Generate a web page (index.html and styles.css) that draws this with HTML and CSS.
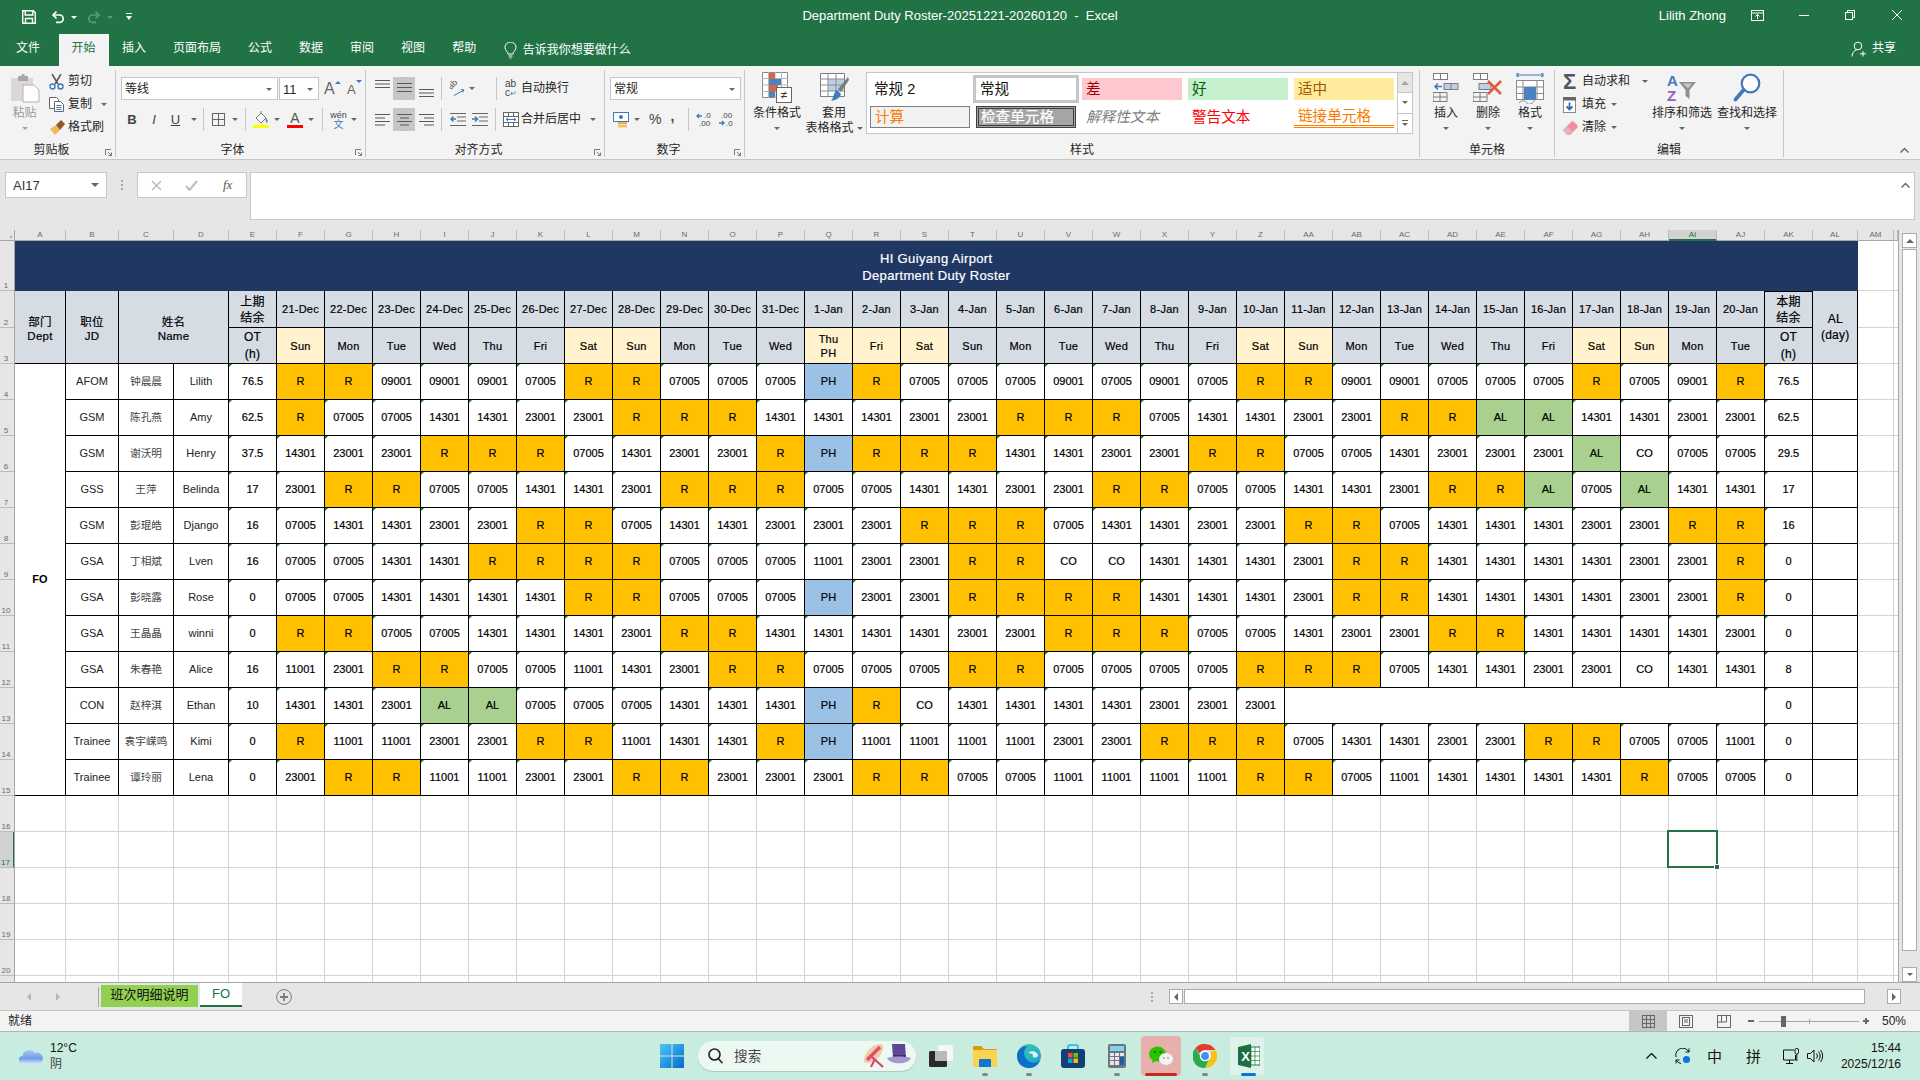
FILE: index.html
```html
<!DOCTYPE html>
<html lang="zh-CN">
<head>
<meta charset="utf-8">
<title>Department Duty Roster - Excel</title>
<link rel="stylesheet" href="styles.css">
</head>
<body>
<header class="titlebar">
  <div class="qat">
    <svg class="q-save" width="14" height="14" viewBox="0 0 14 14" fill="none" stroke="#fff" stroke-width="1.4"><path d="M.7.7h10.6l2 2v10.6H.7z"/><path d="M3.2 1v4h7.6V1M3.5 13.2V8.5h7v4.7"/></svg>
    <svg class="q-undo" width="14" height="14" viewBox="0 0 14 14" fill="none" stroke="#fff" stroke-width="1.7"><path d="M5.5 1.5L2 5l3.5 3.5"/><path d="M2 5h6.5a3.7 3.7 0 0 1 0 7.4H5"/></svg>
    <span class="car car-w q-c1"></span>
    <svg class="q-redo" width="14" height="14" viewBox="0 0 14 14" fill="none" stroke="#5f9a7c" stroke-width="1.7"><path d="M8.5 1.5L12 5 8.5 8.5"/><path d="M12 5H5.5a3.7 3.7 0 0 0 0 7.4H9"/></svg>
    <span class="car car-d q-c2"></span>
    <svg class="q-more" width="6" height="8" viewBox="0 0 6 8" fill="#fff"><rect width="6" height="1"/><path d="M0 3h6L3 7z"/></svg>
  </div>
  <div class="doc-title">Department Duty Roster-20251221-20260120&nbsp; - &nbsp;Excel</div>
  <div class="winctl">
    <span class="user">Lilith Zhong</span>
    <svg class="w-rib" width="13" height="11" viewBox="0 0 13 11" fill="none" stroke="#fff"><rect x=".5" y=".5" width="12" height="10"/><path d="M.5 3h12M6.5 9V4.5M4.5 6.5l2-2 2 2"/></svg>
    <svg class="w-min" width="10" height="1" viewBox="0 0 10 1"><rect width="10" height="1" fill="#fff"/></svg>
    <svg class="w-res" width="10" height="10" viewBox="0 0 10 10" fill="none" stroke="#fff"><rect x=".5" y="2.5" width="7" height="7"/><path d="M2.5 2.5v-2h7v7h-2"/></svg>
    <svg class="w-cls" width="10" height="10" viewBox="0 0 10 10" stroke="#fff"><path d="M0 0l10 10M10 0L0 10"/></svg>
  </div>
</header>

<nav class="tabs">
  <span class="tab tab-file">文件</span>
  <span class="tab tab-on">开始</span>
  <span class="tab">插入</span>
  <span class="tab">页面布局</span>
  <span class="tab">公式</span>
  <span class="tab">数据</span>
  <span class="tab">审阅</span>
  <span class="tab">视图</span>
  <span class="tab">帮助</span>
  <span class="tell">
    <svg width="13" height="17" viewBox="0 0 13 17" fill="none" stroke="#fff"><path d="M4 12c0-2.500-3-3.500-3-6.500a5.500 5.500 0 0 1 11 0c0 3-3 4-3 6.500z"/><path d="M4.500 14h4M5.500 16h2"/></svg>
    告诉我你想要做什么
  </span>
  <span class="share">
    <svg width="16" height="16" viewBox="0 0 16 16" fill="none" stroke="#fff"><circle cx="7" cy="5" r="3.800"/><path d="M1 15.500c0-4 2.500-6 4.500-6.500M12 10v5.500M9 12.800h6"/></svg>
    共享
  </span>
</nav>

<section class="ribbon">
  <!-- clipboard -->
  <div class="group g-clip">
    <div class="gbody">
      <div class="big big-paste">
        <span class="slot">
          <svg width="30" height="30" viewBox="0 0 30 30"><path d="M1 5h22v23H1z" fill="#dcd8d9"/><path d="M8 3h3a2 2 0 0 1 4 0h3v5H8z" fill="#a9a6a7"/><path d="M13 12h11l5 5v12H13z" fill="#fdfdfd" stroke="#b3b3b3"/></svg>
        </span>
        <span class="off">粘贴</span>
        <span class="car car-g"></span>
      </div>
      <div class="smalls">
        <div class="srow"><span class="sic"><svg width="15" height="16" viewBox="0 0 15 16" fill="none"><path d="M3 0l6 10M12 0L6 10" stroke="#555" stroke-width="1.500"/><circle cx="3.500" cy="12.500" r="2.500" stroke="#3f78bd" stroke-width="1.400"/><circle cx="11.500" cy="12.500" r="2.500" stroke="#3f78bd" stroke-width="1.400"/></svg></span>剪切</div>
        <div class="srow"><span class="sic"><svg width="15" height="15" viewBox="0 0 15 15" fill="#fff" stroke="#666"><path d="M.5.5h7l2 2v9h-9z"/><path d="M5.500 4.500h6l3 3v7h-9z"/><path d="M7.500 8.500h5M7.500 10.500h5M7.500 12.500h5" stroke="#3f78bd"/></svg></span>复制<span class="car car-ml9"></span></div>
        <div class="srow"><span class="sic"><svg width="16" height="15" viewBox="0 0 16 15"><path d="M1 9l6-4 4 5-5 5z" fill="#efb75e"/><path d="M7 5l5-5 4 4-5 6z" fill="#8b5c29"/></svg></span>格式刷</div>
      </div>
    </div>
    <div class="glabel lab-clip">剪贴板<svg class="launch" width="7" height="7" viewBox="0 0 7 7" fill="none" stroke="#7a7a7a"><path d="M.5 6V.5H6M3 3l3.500 3.500M6.500 3.500v3h-3"/></svg></div>
  </div>

  <!-- font -->
  <div class="group g-font">
    <div class="gbody gstack">
      <div class="trow pl5">
        <div class="combo c-font">等线<span class="car car-end"></span></div>
        <div class="combo c-size">11<span class="car car-end"></span></div>
        <span class="fs fs-up">A<i class="tri-up"></i></span>
        <span class="fs fs-dn">A<i class="tri-dn"></i></span>
      </div>
      <div class="trow pl5">
        <span class="bt bt-b">B</span><span class="bt bt-i">I</span><span class="bt bt-u">U</span><span class="car car-u"></span>
        <span class="vsep sp-a"></span>
        <svg class="i-bord" width="13" height="13" viewBox="0 0 13 13" fill="none" stroke="#666"><rect x=".5" y=".5" width="12" height="12"/><path d="M6.500 0v13M0 6.500h13"/></svg><span class="car car-b"></span>
        <span class="vsep sp-b"></span>
        <svg class="i-fill" width="16" height="17" viewBox="0 0 16 17"><path d="M3 7l5-5 5 5-5 5z" fill="#fff" stroke="#777"/><path d="M8 2V0" stroke="#777"/><path d="M13 7c2 2 2 4 1 5-1-1-2-3-1-5z" fill="#3f78bd"/><rect y="14" width="16" height="3" fill="#ff0"/></svg><span class="car car-f"></span>
        <span class="i-color">A</span><span class="car car-f"></span>
        <span class="vsep sp-c"></span>
        <span class="i-wen"><b>wén</b><b class="wen-b">文</b></span><span class="car car-w2"></span>
      </div>
    </div>
    <div class="glabel lab-font">字体<svg class="launch" width="7" height="7" viewBox="0 0 7 7" fill="none" stroke="#7a7a7a"><path d="M.5 6V.5H6M3 3l3.500 3.500M6.500 3.500v3h-3"/></svg></div>
  </div>

  <!-- alignment -->
  <div class="group g-align">
    <div class="gbody gstack">
      <div class="trow pl9">
        <svg class="al" width="15" height="23" viewBox="0 0 15 23" stroke="#595959"><path d="M0 3.500h15M0 7h15M0 10.500h15"/></svg>
        <span class="alon"><svg width="15" height="23" viewBox="0 0 15 23" stroke="#595959"><path d="M0 6.500h15M0 10.500h15M0 14.500h15"/></svg></span>
        <svg class="al al-l" width="15" height="23" viewBox="0 0 15 23" stroke="#595959"><path d="M0 12.500h15M0 16h15M0 19.500h15"/></svg>
        <span class="vsep sp-d"></span>
        <svg class="i-ori" width="16" height="16" viewBox="0 0 16 16" fill="none"><text transform="translate(1 9) rotate(-45)" class="ori">ab</text><path d="M4 14.500l10-5.500M14 9l-3-.5M14 9l-1.500 2.500" stroke="#3f78bd"/></svg><span class="car car-o"></span>
        <span class="vsep sp-e"></span>
        <span class="i-wrap"><b>ab</b><b>c<i>↵</i></b></span><span class="rtext">自动换行</span>
      </div>
      <div class="trow pl9">
        <svg class="al" width="15" height="23" viewBox="0 0 15 23" stroke="#595959"><path d="M0 6.500h15M0 10h10M0 13.500h15M0 17h10"/></svg>
        <span class="alon"><svg width="15" height="23" viewBox="0 0 15 23" stroke="#595959"><path d="M0 6.500h15M3 10h9M0 13.500h15M3 17h9"/></svg></span>
        <svg class="al al-l" width="15" height="23" viewBox="0 0 15 23" stroke="#595959"><path d="M0 6.500h15M5 10h10M0 13.500h15M5 17h10"/></svg>
        <span class="vsep sp-d"></span>
        <svg class="i-ind" width="16" height="13" viewBox="0 0 16 13" fill="none"><path d="M0 .5h16M7 4h9M7 8h9M0 12.500h16" stroke="#666"/><path d="M6 6H1M3.500 3.500L1 6l2.500 2.500" stroke="#3f78bd" stroke-width="1.500"/></svg>
        <svg class="i-ind2" width="16" height="13" viewBox="0 0 16 13" fill="none"><path d="M0 .5h16M7 4h9M7 8h9M0 12.500h16" stroke="#666"/><path d="M0 6h5M3 3.500L5.500 6 3 8.500" stroke="#3f78bd" stroke-width="1.500"/></svg>
        <span class="vsep sp-f"></span>
        <svg class="i-merge" width="16" height="15" viewBox="0 0 16 15" fill="#fff" stroke="#666"><rect x=".5" y=".5" width="15" height="14"/><path d="M0 4.500h16M0 10.500h16M5.500 10.500V15M10.500 10.500V15M5.500 0v4.500M10.500 0v4.500" fill="none"/><path d="M3 7.500h10M5 6l-2 1.500L5 9M11 6l2 1.500L11 9" fill="none" stroke="#3f78bd"/></svg>
        <span class="rtext">合并后居中</span><span class="car car-m"></span>
      </div>
    </div>
    <div class="glabel lab-align">对齐方式<svg class="launch" width="7" height="7" viewBox="0 0 7 7" fill="none" stroke="#7a7a7a"><path d="M.5 6V.5H6M3 3l3.500 3.500M6.500 3.500v3h-3"/></svg></div>
  </div>

  <!-- number -->
  <div class="group g-num">
    <div class="gbody gstack">
      <div class="trow pl5"><div class="combo c-num">常规<span class="car car-end"></span></div></div>
      <div class="trow pl8">
        <svg width="16" height="16" viewBox="0 0 16 16"><rect x=".5" y=".5" width="15" height="9" fill="#fff" stroke="#3f78bd"/><circle cx="8" cy="5" r="2" fill="#3f78bd"/><rect x="5" y="10" width="9" height="2" fill="#e8b34c"/><rect x="5" y="12.500" width="9" height="3" fill="#efc66f"/></svg>
        <span class="car car-n"></span>
        <span class="pct">%</span><span class="cma">,</span>
        <span class="vsep sp-g"></span>
        <span class="dec"><svg width="15" height="15" viewBox="0 0 15 15"><path d="M6 4H1M3 2L1 4l2 2" fill="none" stroke="#3f78bd" stroke-width="1.300"/><text x="8" y="6" class="dt">.0</text><text x="3" y="14" class="dt">.00</text></svg></span>
        <span class="dec dec2"><svg width="15" height="15" viewBox="0 0 15 15"><text x="3" y="6" class="dt">.00</text><path d="M1 11h5M4 9l2 2-2 2" fill="none" stroke="#3f78bd" stroke-width="1.300"/><text x="8" y="14" class="dt">.0</text></svg></span>
      </div>
    </div>
    <div class="glabel lab-num">数字<svg class="launch" width="7" height="7" viewBox="0 0 7 7" fill="none" stroke="#7a7a7a"><path d="M.5 6V.5H6M3 3l3.500 3.500M6.500 3.500v3h-3"/></svg></div>
  </div>

  <!-- styles -->
  <div class="group g-style">
    <div class="gbody gflex">
      <div class="big big-cf">
        <span class="slot"><svg width="30" height="31" viewBox="0 0 30 31"><path d="M.5.5h25v25H.5z" fill="#fff" stroke="#8a8a8a"/><path d="M6.500 0v26M13 0v26M19.500 0v26M0 6.500h26M0 13h26M0 19.500h26" stroke="#b5b5b5"/><rect x="7" y="1" width="6" height="6" fill="#d9663f"/><rect x="7" y="7" width="12" height="6" fill="#4c82bf"/><rect x="7" y="13" width="9" height="6" fill="#d9663f"/><rect x="7" y="19" width="6" height="6" fill="#4c82bf"/><rect x="14.500" y="15.500" width="15" height="15" fill="#fff" stroke="#666"/><text x="22" y="27" class="ne">≠</text></svg></span>
        <span>条件格式</span><span class="car"></span>
      </div>
      <div class="big big-tf">
        <span class="slot"><svg width="29" height="29" viewBox="0 0 29 29"><path d="M.5.5h24v23H.5z" fill="#fff" stroke="#7d7d7d"/><rect x="8" y="6" width="16" height="12" fill="#bcd0e6"/><path d="M8 0v24M16 0v24M0 6h24M0 12h24M0 18h24" stroke="#8d8d8d"/><path d="M28 4L18 16l3 3 8-12z" fill="#7c7c7c"/><path d="M17 17l4 4c-1 4-5 6-10 7 3-3 2-8 6-11z" fill="#3f78bd"/></svg></span>
        <span>套用</span><span class="tf2">表格格式<span class="car car-tf"></span></span>
      </div>
      <div class="gallery">
        <div class="sgrid">
          <span class="st">常规 2</span>
          <span class="st st-sel">常规</span>
          <span class="st st-bad">差</span>
          <span class="st st-good">好</span>
          <span class="st st-mid">适中</span>
          <span class="st st-calc">计算</span>
          <span class="st st-chk">检查单元格</span>
          <span class="st st-exp">解释性文本</span>
          <span class="st st-warn">警告文本</span>
          <span class="st st-link">链接单元格</span>
        </div>
        <div class="sscroll">
          <span class="ssb ssb-dis"><i class="tri-g"></i></span>
          <span class="ssb"><span class="car"></span></span>
          <span class="ssb ssb-more"><em></em><span class="car"></span></span>
        </div>
      </div>
    </div>
    <div class="glabel">样式</div>
  </div>

  <!-- cells -->
  <div class="group g-cells">
    <div class="gbody gflex pl5x">
      <div class="big big-cell">
        <span class="slot"><svg width="26" height="29" viewBox="0 0 26 29" fill="#fff" stroke="#7d7d7d"><rect x=".5" y=".5" width="14" height="6"/><path d="M7.500 0v7M0 19.500h14v9H0zM7 19v10M0 24h14" fill="none"/><rect x="11" y="10.500" width="14" height="6" fill="#bcd0e6"/><path d="M18 10v7" fill="none"/><path d="M9 13.500H2M5 10.500l-3 3 3 3" fill="none" stroke="#3f78bd" stroke-width="1.500"/></svg></span>
        <span>插入</span><span class="car"></span>
      </div>
      <div class="big big-cell">
        <span class="slot"><svg width="30" height="29" viewBox="0 0 30 29" fill="#fff" stroke="#7d7d7d"><rect x=".5" y=".5" width="14" height="6"/><path d="M7.500 0v7M0 19.500h14v9H0zM7 19v10M0 24h14" fill="none"/><rect x="6" y="10.500" width="12" height="6" fill="#bcd0e6"/><path d="M15 8l13 13M28 8L15 21" stroke="#dd5c3a" stroke-width="2.500"/></svg></span>
        <span>删除</span><span class="car"></span>
      </div>
      <div class="big big-cell">
        <span class="slot"><svg width="28" height="32" viewBox="0 0 28 32" fill="none" stroke="#8a8a8a"><path d="M1 3h26M1 1v4M27 1v4M3 1L1 3l2 2M25 1l2 2-2 2" stroke="#3f78bd"/><rect x=".5" y="8.500" width="27" height="19" fill="#fff"/><path d="M7 8v19M21 8v19M0 15h28M0 21.500h28"/><rect x="8" y="15" width="12" height="13" fill="#4c82bf" stroke="none"/><path d="M3 31c3-3 6-3 8 0s6 0 8-3"/></svg></span>
        <span>格式</span><span class="car"></span>
      </div>
    </div>
    <div class="glabel">单元格</div>
  </div>

  <!-- editing -->
  <div class="group g-edit">
    <div class="gbody gflex">
      <div class="smalls sm-edit">
        <div class="srow"><span class="sic sic-e"><span class="sigma">Σ</span></span>自动求和<span class="car car-sum"></span></div>
        <div class="srow"><span class="sic sic-e"><svg width="13" height="16" viewBox="0 0 13 16"><rect x=".5" y=".5" width="12" height="15" fill="#fff" stroke="#8a8a8a"/><rect width="13" height="3.500" fill="#666"/><path d="M6.500 5.500v7M3.500 9.500l3 3 3-3" fill="none" stroke="#2f6db0" stroke-width="1.800"/></svg></span>填充<span class="car car-fl"></span></div>
        <div class="srow"><span class="sic sic-e"><svg width="15" height="14" viewBox="0 0 15 14"><path d="M0 9l8-8c1-1 2-1 3 0l3 3c1 1 1 2 0 3l-7 7H4z" fill="#ee8fa3"/><path d="M0 9l4-4 5 5-3 4H4z" fill="#e7b2bc"/></svg></span>清除<span class="car car-fl"></span></div>
      </div>
      <div class="big big-sort">
        <span class="slot"><svg width="30" height="29" viewBox="0 0 30 29"><text x="0" y="13" class="az az-a">A</text><text x="0" y="28" class="az az-z">Z</text><path d="M12 9h17l-6.500 8v9l-4-3v-6z" fill="#8f8f8f"/><path d="M16 10.500h9l-4 5z" fill="#c7c7c7"/></svg></span>
        <span>排序和筛选</span><span class="car"></span>
      </div>
      <div class="big big-find">
        <span class="slot"><svg width="28" height="29" viewBox="0 0 28 29" fill="none" stroke="#3f78bd"><circle cx="17.500" cy="10.500" r="8.800" stroke-width="2.200" fill="#fff"/><path d="M10.500 17L2.500 26.500" stroke-width="3.600" stroke-linecap="round"/></svg></span>
        <span>查找和选择</span><span class="car"></span>
      </div>
    </div>
    <div class="glabel">编辑</div>
  </div>
  <div class="collapse"><svg width="9" height="6" viewBox="0 0 9 6" fill="none" stroke="#666" stroke-width="1.500"><path d="M.5 5.500L4.500 1.500l4 4"/></svg></div>
</section>

<section class="fbar">
  <div class="namebox">AI17<span class="car car-nb"></span></div>
  <div class="fdots"><i></i><i></i><i></i></div>
  <div class="fnbox">
    <svg width="11" height="11" viewBox="0 0 11 11" stroke="#bdbdbd" stroke-width="1.600"><path d="M1 1l9 9M10 1l-9 9"/></svg>
    <svg width="13" height="11" viewBox="0 0 13 11" fill="none" stroke="#bdbdbd" stroke-width="2"><path d="M1 6l3.500 4L12 1"/></svg>
    <span class="fx">fx</span>
  </div>
  <div class="finput"><svg width="9" height="6" viewBox="0 0 9 6" fill="none" stroke="#666" stroke-width="1.500"><path d="M.5 5.500L4.500 1.500l4 4"/></svg></div>
</section>

<section class="sheetarea">
  <div class="sheet">
    <div class="rowheads">
      <div class="corner"><i></i></div>
      <div class="rh rh1">1</div><div class="rh rh2">2</div>
      <div class="rh">3</div><div class="rh">4</div><div class="rh">5</div><div class="rh">6</div><div class="rh">7</div><div class="rh">8</div><div class="rh">9</div><div class="rh">10</div><div class="rh">11</div><div class="rh">12</div><div class="rh">13</div><div class="rh">14</div><div class="rh">15</div><div class="rh">16</div>
      <div class="rh rh-sel">17</div>
      <div class="rh">18</div><div class="rh">19</div><div class="rh">20</div><div class="rh"></div>
    </div>
    <div class="sheetmain">
      <div class="colheads">
        <span>A</span><span>B</span><span>C</span><span>D</span><span>E</span><span>F</span><span>G</span><span>H</span><span>I</span><span>J</span><span>K</span><span>L</span><span>M</span><span>N</span><span>O</span><span>P</span><span>Q</span><span>R</span><span>S</span><span>T</span><span>U</span><span>V</span><span>W</span><span>X</span><span>Y</span><span>Z</span><span>AA</span><span>AB</span><span>AC</span><span>AD</span><span>AE</span><span>AF</span><span>AG</span><span>AH</span><span class="ch-sel">AI</span><span>AJ</span><span>AK</span><span>AL</span><span>AM</span><span></span>
      </div>
      <table class="roster">
        <colgroup>
          <col class="ca"><col class="cb"><col class="cc"><col class="cc">
          <col class="cd"><col class="cd"><col class="cd"><col class="cd"><col class="cd"><col class="cd"><col class="cd"><col class="cd"><col class="cd"><col class="cd"><col class="cd"><col class="cd"><col class="cd"><col class="cd"><col class="cd"><col class="cd"><col class="cd"><col class="cd"><col class="cd"><col class="cd"><col class="cd"><col class="cd"><col class="cd"><col class="cd"><col class="cd"><col class="cd"><col class="cd"><col class="cd"><col class="cd"><col class="cd"><col class="cd"><col class="cd"><col class="cd">
          <col class="cal"><col class="cam"><col class="can">
        </colgroup>
        <tr class="r1"><td colspan="38" class="title">HI Guiyang Airport<br>Department Duty Roster</td><td class="g"></td><td class="g2"></td></tr>
        <tr class="r2">
          <td rowspan="2" class="h hb">部门<br>Dept</td><td rowspan="2" class="h hb">职位<br>JD</td><td rowspan="2" colspan="2" class="h hb">姓名<br>Name</td><td class="h hq">上期<br>结余</td>
          <td class="h">21-Dec</td><td class="h">22-Dec</td><td class="h">23-Dec</td><td class="h">24-Dec</td><td class="h">25-Dec</td><td class="h">26-Dec</td><td class="h">27-Dec</td><td class="h">28-Dec</td><td class="h">29-Dec</td><td class="h">30-Dec</td><td class="h">31-Dec</td><td class="h">1-Jan</td><td class="h">2-Jan</td><td class="h">3-Jan</td><td class="h">4-Jan</td><td class="h">5-Jan</td><td class="h">6-Jan</td><td class="h">7-Jan</td><td class="h">8-Jan</td><td class="h">9-Jan</td><td class="h">10-Jan</td><td class="h">11-Jan</td><td class="h">12-Jan</td><td class="h">13-Jan</td><td class="h">14-Jan</td><td class="h">15-Jan</td><td class="h">16-Jan</td><td class="h">17-Jan</td><td class="h">18-Jan</td><td class="h">19-Jan</td><td class="h">20-Jan</td>
          <td class="h hq ht">本期<br>结余</td><td rowspan="2" class="h hal">AL<br>(day)</td><td class="g"></td><td class="g2"></td>
        </tr>
        <tr class="r3">
          <td class="h hq">OT<br>(h)</td>
          <td class="h y">Sun</td><td class="h">Mon</td><td class="h">Tue</td><td class="h">Wed</td><td class="h">Thu</td><td class="h">Fri</td><td class="h y">Sat</td><td class="h y">Sun</td><td class="h">Mon</td><td class="h">Tue</td><td class="h">Wed</td><td class="h y yp">Thu<br>PH</td><td class="h y">Fri</td><td class="h y">Sat</td><td class="h">Sun</td><td class="h">Mon</td><td class="h">Tue</td><td class="h">Wed</td><td class="h">Thu</td><td class="h">Fri</td><td class="h y">Sat</td><td class="h y">Sun</td><td class="h">Mon</td><td class="h">Tue</td><td class="h">Wed</td><td class="h">Thu</td><td class="h">Fri</td><td class="h y">Sat</td><td class="h y">Sun</td><td class="h">Mon</td><td class="h">Tue</td>
          <td class="h hq">OT<br>(h)</td><td class="g"></td><td class="g2"></td>
        </tr>
        <tr><td rowspan="12" class="dept">FO</td><td class="p">AFOM</td><td class="p cn">钟晨晨</td><td class="p">Lilith</td><td class="n">76.5</td><td class="r">R</td><td class="r">R</td><td class="n">09001</td><td class="n">09001</td><td class="n">09001</td><td class="n">07005</td><td class="r">R</td><td class="r">R</td><td class="n">07005</td><td class="n">07005</td><td class="n">07005</td><td class="ph">PH</td><td class="r">R</td><td class="n">07005</td><td class="n">07005</td><td class="n">07005</td><td class="n">09001</td><td class="n">07005</td><td class="n">09001</td><td class="n">07005</td><td class="r">R</td><td class="r">R</td><td class="n">09001</td><td class="n">09001</td><td class="n">07005</td><td class="n">07005</td><td class="n">07005</td><td class="r">R</td><td class="n">07005</td><td class="n">09001</td><td class="r">R</td><td class="n">76.5</td><td></td><td class="g"></td><td class="g2"></td></tr>
        <tr><td class="p">GSM</td><td class="p cn">陈孔燕</td><td class="p">Amy</td><td class="n">62.5</td><td class="r">R</td><td class="n">07005</td><td class="n">07005</td><td class="n">14301</td><td class="n">14301</td><td class="n">23001</td><td class="n">23001</td><td class="r">R</td><td class="r">R</td><td class="r">R</td><td class="n">14301</td><td class="n">14301</td><td class="n">14301</td><td class="n">23001</td><td class="n">23001</td><td class="r">R</td><td class="r">R</td><td class="r">R</td><td class="n">07005</td><td class="n">14301</td><td class="n">14301</td><td class="n">23001</td><td class="n">23001</td><td class="r">R</td><td class="r">R</td><td class="al-c">AL</td><td class="al-c">AL</td><td class="n">14301</td><td class="n">14301</td><td class="n">23001</td><td class="n">23001</td><td class="n">62.5</td><td></td><td class="g"></td><td class="g2"></td></tr>
        <tr><td class="p">GSM</td><td class="p cn">谢沃明</td><td class="p">Henry</td><td class="n">37.5</td><td class="n">14301</td><td class="n">23001</td><td class="n">23001</td><td class="r">R</td><td class="r">R</td><td class="r">R</td><td class="n">07005</td><td class="n">14301</td><td class="n">23001</td><td class="n">23001</td><td class="r">R</td><td class="ph">PH</td><td class="r">R</td><td class="r">R</td><td class="r">R</td><td class="n">14301</td><td class="n">14301</td><td class="n">23001</td><td class="n">23001</td><td class="r">R</td><td class="r">R</td><td class="n">07005</td><td class="n">07005</td><td class="n">14301</td><td class="n">23001</td><td class="n">23001</td><td class="n">23001</td><td class="al-c">AL</td><td class="c">CO</td><td class="n">07005</td><td class="n">07005</td><td class="n">29.5</td><td></td><td class="g"></td><td class="g2"></td></tr>
        <tr><td class="p">GSS</td><td class="p cn">王萍</td><td class="p">Belinda</td><td class="n">17</td><td class="n">23001</td><td class="r">R</td><td class="r">R</td><td class="n">07005</td><td class="n">07005</td><td class="n">14301</td><td class="n">14301</td><td class="n">23001</td><td class="r">R</td><td class="r">R</td><td class="r">R</td><td class="n">07005</td><td class="n">07005</td><td class="n">14301</td><td class="n">14301</td><td class="n">23001</td><td class="n">23001</td><td class="r">R</td><td class="r">R</td><td class="n">07005</td><td class="n">07005</td><td class="n">14301</td><td class="n">14301</td><td class="n">23001</td><td class="r">R</td><td class="r">R</td><td class="al-c">AL</td><td class="n">07005</td><td class="al-c">AL</td><td class="n">14301</td><td class="n">14301</td><td class="n">17</td><td></td><td class="g"></td><td class="g2"></td></tr>
        <tr><td class="p">GSM</td><td class="p cn">彭琨皓</td><td class="p">Django</td><td class="n">16</td><td class="n">07005</td><td class="n">14301</td><td class="n">14301</td><td class="n">23001</td><td class="n">23001</td><td class="r">R</td><td class="r">R</td><td class="n">07005</td><td class="n">14301</td><td class="n">14301</td><td class="n">23001</td><td class="n">23001</td><td class="n">23001</td><td class="r">R</td><td class="r">R</td><td class="r">R</td><td class="n">07005</td><td class="n">14301</td><td class="n">14301</td><td class="n">23001</td><td class="n">23001</td><td class="r">R</td><td class="r">R</td><td class="n">07005</td><td class="n">14301</td><td class="n">14301</td><td class="n">14301</td><td class="n">23001</td><td class="n">23001</td><td class="r">R</td><td class="r">R</td><td class="n">16</td><td></td><td class="g"></td><td class="g2"></td></tr>
        <tr><td class="p">GSA</td><td class="p cn">丁相斌</td><td class="p">Lven</td><td class="n">16</td><td class="n">07005</td><td class="n">07005</td><td class="n">14301</td><td class="n">14301</td><td class="r">R</td><td class="r">R</td><td class="r">R</td><td class="r">R</td><td class="n">07005</td><td class="n">07005</td><td class="n">07005</td><td class="n">11001</td><td class="n">23001</td><td class="n">23001</td><td class="r">R</td><td class="r">R</td><td class="c">CO</td><td class="c">CO</td><td class="n">14301</td><td class="n">14301</td><td class="n">14301</td><td class="n">23001</td><td class="r">R</td><td class="r">R</td><td class="n">14301</td><td class="n">14301</td><td class="n">14301</td><td class="n">14301</td><td class="n">23001</td><td class="n">23001</td><td class="r">R</td><td class="n">0</td><td></td><td class="g"></td><td class="g2"></td></tr>
        <tr><td class="p">GSA</td><td class="p cn">彭晓露</td><td class="p">Rose</td><td class="n">0</td><td class="n">07005</td><td class="n">07005</td><td class="n">14301</td><td class="n">14301</td><td class="n">14301</td><td class="n">14301</td><td class="r">R</td><td class="r">R</td><td class="n">07005</td><td class="n">07005</td><td class="n">07005</td><td class="ph">PH</td><td class="n">23001</td><td class="n">23001</td><td class="r">R</td><td class="r">R</td><td class="r">R</td><td class="r">R</td><td class="n">14301</td><td class="n">14301</td><td class="n">14301</td><td class="n">23001</td><td class="r">R</td><td class="r">R</td><td class="n">14301</td><td class="n">14301</td><td class="n">14301</td><td class="n">14301</td><td class="n">23001</td><td class="n">23001</td><td class="r">R</td><td class="n">0</td><td></td><td class="g"></td><td class="g2"></td></tr>
        <tr><td class="p">GSA</td><td class="p cn">王晶晶</td><td class="p">winni</td><td class="n">0</td><td class="r">R</td><td class="r">R</td><td class="n">07005</td><td class="n">07005</td><td class="n">14301</td><td class="n">14301</td><td class="n">14301</td><td class="n">23001</td><td class="r">R</td><td class="r">R</td><td class="n">14301</td><td class="n">14301</td><td class="n">14301</td><td class="n">14301</td><td class="n">23001</td><td class="n">23001</td><td class="r">R</td><td class="r">R</td><td class="r">R</td><td class="n">07005</td><td class="n">07005</td><td class="n">14301</td><td class="n">23001</td><td class="n">23001</td><td class="r">R</td><td class="r">R</td><td class="n">14301</td><td class="n">14301</td><td class="n">14301</td><td class="n">14301</td><td class="n">23001</td><td class="n">0</td><td></td><td class="g"></td><td class="g2"></td></tr>
        <tr><td class="p">GSA</td><td class="p cn">朱春艳</td><td class="p">Alice</td><td class="n">16</td><td class="n">11001</td><td class="n">23001</td><td class="r">R</td><td class="r">R</td><td class="n">07005</td><td class="n">07005</td><td class="n">11001</td><td class="n">14301</td><td class="n">23001</td><td class="r">R</td><td class="r">R</td><td class="n">07005</td><td class="n">07005</td><td class="n">07005</td><td class="r">R</td><td class="r">R</td><td class="n">07005</td><td class="n">07005</td><td class="n">07005</td><td class="n">07005</td><td class="r">R</td><td class="r">R</td><td class="r">R</td><td class="n">07005</td><td class="n">14301</td><td class="n">14301</td><td class="n">23001</td><td class="n">23001</td><td class="c">CO</td><td class="n">14301</td><td class="n">14301</td><td class="n">8</td><td></td><td class="g"></td><td class="g2"></td></tr>
        <tr><td class="p">CON</td><td class="p cn">赵梓淇</td><td class="p">Ethan</td><td class="n">10</td><td class="n">14301</td><td class="n">14301</td><td class="n">23001</td><td class="al-c">AL</td><td class="al-c">AL</td><td class="n">07005</td><td class="n">07005</td><td class="n">07005</td><td class="n">14301</td><td class="n">14301</td><td class="n">14301</td><td class="ph">PH</td><td class="r">R</td><td class="c">CO</td><td class="n">14301</td><td class="n">14301</td><td class="n">14301</td><td class="n">14301</td><td class="n">23001</td><td class="n">23001</td><td class="n">23001</td><td colspan="10"></td><td class="n">0</td><td></td><td class="g"></td><td class="g2"></td></tr>
        <tr><td class="p">Trainee</td><td class="p cn">袁宇嵘鸣</td><td class="p">Kimi</td><td class="n">0</td><td class="r">R</td><td class="n">11001</td><td class="n">11001</td><td class="n">23001</td><td class="n">23001</td><td class="r">R</td><td class="r">R</td><td class="n">11001</td><td class="n">14301</td><td class="n">14301</td><td class="r">R</td><td class="ph">PH</td><td class="n">11001</td><td class="n">11001</td><td class="n">11001</td><td class="n">11001</td><td class="n">23001</td><td class="n">23001</td><td class="r">R</td><td class="r">R</td><td class="r">R</td><td class="n">07005</td><td class="n">14301</td><td class="n">14301</td><td class="n">23001</td><td class="n">23001</td><td class="r">R</td><td class="r">R</td><td class="n">07005</td><td class="n">07005</td><td class="n">11001</td><td class="n">0</td><td></td><td class="g"></td><td class="g2"></td></tr>
        <tr><td class="p">Trainee</td><td class="p cn">谭玲丽</td><td class="p">Lena</td><td class="n">0</td><td class="n">23001</td><td class="r">R</td><td class="r">R</td><td class="n">11001</td><td class="n">11001</td><td class="n">23001</td><td class="n">23001</td><td class="r">R</td><td class="r">R</td><td class="n">23001</td><td class="n">23001</td><td class="n">23001</td><td class="r">R</td><td class="r">R</td><td class="n">07005</td><td class="n">07005</td><td class="n">11001</td><td class="n">11001</td><td class="n">11001</td><td class="n">11001</td><td class="r">R</td><td class="r">R</td><td class="n">07005</td><td class="n">11001</td><td class="n">14301</td><td class="n">14301</td><td class="n">14301</td><td class="n">14301</td><td class="r">R</td><td class="n">07005</td><td class="n">07005</td><td class="n">0</td><td></td><td class="g"></td><td class="g2"></td></tr>
      </table>
      <div class="blank">
        <i></i><i></i><i></i><i></i><i></i><i></i><i></i><i></i><i></i><i></i><i></i><i></i><i></i><i></i><i></i><i></i><i></i><i></i><i></i><i></i><i></i><i></i><i></i><i></i><i></i><i></i><i></i><i></i><i></i><i></i><i></i><i></i><i></i><i></i><i></i><i></i><i></i><i></i><i></i><i></i>
        <div class="sel"><b></b></div>
      </div>
    </div>
  </div>
  <div class="vscroll">
    <span class="vbtn"><i class="tri-g"></i></span>
    <span class="vthumb"></span>
    <span class="vbtn vbtn-d"><span class="car"></span></span>
  </div>
</section>

<section class="tabbar">
  <span class="nav n1"><i class="tri-l"></i></span>
  <span class="nav n2"><i class="tri-r"></i></span>
  <span class="tsep"></span>
  <span class="sh sh-g">班次明细说明</span>
  <span class="sh sh-on">FO</span>
  <svg class="sh-add" width="16" height="16" viewBox="0 0 16 16" fill="none" stroke="#7a7a7a"><circle cx="8" cy="8" r="7.400"/><path d="M8 4v8M4 8h8" stroke-width="1.800"/></svg>
  <span class="hdots"><i></i><i></i><i></i></span>
  <span class="hbtn hbtn-l"><i class="tri-l"></i></span>
  <span class="hthumb"></span>
  <span class="hbtn hbtn-r"><i class="tri-r"></i></span>
</section>

<footer class="status">
  <span class="ready">就绪</span>
  <span class="view view-on"><svg width="13" height="13" viewBox="0 0 13 13" fill="none" stroke="#666"><rect x=".5" y=".5" width="12" height="12"/><path d="M4.500 0v13M8.500 0v13M0 4.500h13M0 8.500h13"/></svg></span>
  <span class="view"><svg width="14" height="13" viewBox="0 0 14 13" fill="none" stroke="#666"><rect x=".5" y=".5" width="13" height="12"/><rect x="3.500" y="2.500" width="7" height="8"/><path d="M5 5h4M5 7h4"/></svg></span>
  <span class="view"><svg width="14" height="13" viewBox="0 0 14 13" fill="none" stroke="#666"><rect x=".5" y=".5" width="13" height="12"/><path d="M4.500 0v7M9.500 0v7M0 7h9.500"/></svg></span>
  <span class="zm zm-minus"></span>
  <span class="slider"><i class="sl-t"></i><i class="sl-m"></i></span>
  <span class="zm zm-plus"></span>
  <span class="pctz">50%</span>
</footer>

<footer class="taskbar">
  <div class="weather">
    <svg width="24" height="18" viewBox="0 0 24 18"><defs><linearGradient id="cl" x1="0" y1="0" x2="0" y2="1"><stop offset="0" stop-color="#a8c6f5"/><stop offset=".6" stop-color="#6f9fe8"/><stop offset="1" stop-color="#d8e6fb"/></linearGradient></defs><path d="M4 17a4 4 0 0 1-.6-8A7 7 0 0 1 16 6a5.500 5.500 0 0 1 4 11z" fill="url(#cl)"/></svg>
    <div class="wtext"><span>12°C</span><span class="wcn">阴</span></div>
  </div>
  <svg class="winlogo" width="24" height="24" viewBox="0 0 24 24"><defs><linearGradient id="wl" x1="0" y1="0" x2="1" y2="1"><stop offset="0" stop-color="#4cc7f7"/><stop offset="1" stop-color="#0568cf"/></linearGradient></defs><path d="M0 0h11.500v11.500H0zM12.500 0H24v11.500H12.500zM0 12.500h11.500V24H0zM12.500 12.500H24V24H12.500z" fill="url(#wl)"/></svg>
  <div class="search">
    <svg width="15" height="16" viewBox="0 0 15 16" fill="none" stroke="#222" stroke-width="1.600"><circle cx="6.500" cy="6.500" r="5.500"/><path d="M10.500 10.800l4 4.500"/></svg>
    <span class="s-txt">搜索</span>
    <svg class="s-art" width="48" height="26" viewBox="0 0 48 26"><path d="M1 17C2 8 10 1 17 1c4 0 4 4 2 8-3 7-9 11-15 11-2 0-3-1-3-3z" fill="#f0cda8"/><path d="M4 17L17 4" stroke="#e0506e" stroke-width="3.500"/><path d="M9 14l11 10M12 16l-4 8" stroke="#d8406a" stroke-width="2"/><path d="M29 1h13l1 14H30z" fill="#5b4a92"/><path d="M30 12h13v3H30z" fill="#3c2f6c"/><path d="M24 15c5-2 19-2 24 0-3 7-21 7-24 0z" fill="#a59ad0"/></svg>
  </div>
  <span class="ts"><svg width="24" height="22" viewBox="0 0 24 22"><rect x="9" width="15" height="16" rx="1.500" fill="#f7f7f7"/><rect y="6" width="18" height="16" rx="1.500" fill="#2a2a2a"/><rect x="6" y="6" width="12" height="10" fill="#b9b9b9"/></svg></span>
  <span class="ts run"><svg width="24" height="21" viewBox="0 0 24 21"><path d="M0 1a1 1 0 0 1 1-1h7l3 3h12a1 1 0 0 1 1 1v3H0z" fill="#d99b0c"/><path d="M0 4h24v16a1 1 0 0 1-1 1H1a1 1 0 0 1-1-1z" fill="#fcd34f"/><path d="M6 14a1 1 0 0 1 1-1h10a1 1 0 0 1 1 1v7H6z" fill="#1175d1"/></svg></span>
  <span class="ts run"><svg width="24" height="24" viewBox="0 0 24 24"><defs><linearGradient id="ed1" x1="0" y1="0" x2="1" y2="1"><stop offset="0" stop-color="#3bd3a8"/><stop offset="1" stop-color="#1a9bd8"/></linearGradient></defs><circle cx="12" cy="12" r="12" fill="url(#ed1)"/><path d="M0 12C0 5 6 2 11 2c-5 3-5 10-1 14 3 3 9 4 13 0-2 5-6 8-11 8C5 24 0 19 0 12z" fill="#0c6fc9"/><path d="M11 9c3-3 9-2 10 2 0 3-4 3-5 2s1-2-1-3c-1-1-3-1-4-1z" fill="#fff" opacity=".85"/></svg></span>
  <span class="ts"><svg width="24" height="24" viewBox="0 0 24 24"><path d="M7 6V3a2 2 0 0 1 2-2h6a2 2 0 0 1 2 2v3" fill="none" stroke="#2ec6ea" stroke-width="2"/><rect y="5" width="24" height="19" rx="3" fill="#143f73"/><rect x="7" y="9" width="4.500" height="4.500" fill="#f25022"/><rect x="12.500" y="9" width="4.500" height="4.500" fill="#7fba00"/><rect x="7" y="14.500" width="4.500" height="4.500" fill="#00a4ef"/><rect x="12.500" y="14.500" width="4.500" height="4.500" fill="#ffb900"/></svg></span>
  <span class="ts run"><svg width="18" height="24" viewBox="0 0 18 24"><rect width="18" height="24" rx="2" fill="#6e7580"/><rect x="2" y="2" width="14" height="5" fill="#7fd3f0"/><path d="M2 9h4v3H2zM7 9h4v3H7zM2 13h4v3H2zM7 13h4v3H7zM2 17h4v4H2zM7 17h4v4H7z" fill="#e5e7ea"/><rect x="12" y="9" width="4" height="3" fill="#e5e7ea"/><rect x="12" y="13" width="4" height="8" fill="#1f5da5"/></svg></span>
  <span class="ts ts-wx"><svg width="24" height="20" viewBox="0 0 24 20"><ellipse cx="8.500" cy="8" rx="8.500" ry="7.500" fill="#2dc100"/><path d="M4 13l-1 4 4-2z" fill="#2dc100"/><circle cx="6" cy="6" r="1.200" fill="#127a00"/><circle cx="11.500" cy="6" r="1.200" fill="#127a00"/><ellipse cx="17" cy="13" rx="7" ry="6" fill="#f3f3f3"/><circle cx="15" cy="12" r=".9" fill="#9a9a9a"/><circle cx="19" cy="12" r=".9" fill="#9a9a9a"/></svg></span>
  <span class="ts run"><svg width="24" height="24" viewBox="0 0 24 24"><path d="M12 0a12 12 0 0 1 10.400 6H12a6 6 0 0 0-5.500 3.500L2.500 4A12 12 0 0 1 12 0z" fill="#e33b2e"/><path d="M22.400 6A12 12 0 0 1 12 24l5.100-9A6 6 0 0 0 17 8z" fill="#fbc116"/><path d="M2.500 4l4.800 8a5 5 0 0 0 9 3L12 24A12 12 0 0 1 2.500 4z" fill="#2da94f"/><circle cx="12" cy="12" r="4.600" fill="#4a8df1" stroke="#fff" stroke-width="1.200"/></svg></span>
  <span class="ts ts-xl"><svg width="22" height="24" viewBox="0 0 22 24"><rect x="9" y="3" width="13" height="18" fill="#fff" stroke="#1d7a47"/><path d="M13 3v18M17 3v18M9 7.500h13M9 12h13M9 16.500h13" stroke="#1d7a47" stroke-width=".7"/><path d="M0 3l13-3v24L0 21z" fill="#1d6f42"/><text x="3.200" y="16.500" class="xl">X</text></svg></span>
  <div class="tray">
    <svg class="tr-up" width="11" height="6" viewBox="0 0 11 6" fill="none" stroke="#111" stroke-width="1.300"><path d="M.5 5.500l5-5 5 5"/></svg>
    <svg class="tr-sync" width="16" height="16" viewBox="0 0 16 16" fill="none" stroke="#111"><path d="M1 9A7 7 0 0 1 14 4M14 .5V4h-3.500M1 15.500V12h3.500M1 12a7 7 0 0 0 5 3.500"/><circle cx="11.500" cy="11.500" r="3.600" fill="#0a74da" stroke="none"/></svg>
    <span class="tr-zh">中</span>
    <span class="tr-py">拼</span>
    <svg class="tr-mon" width="16" height="16" viewBox="0 0 16 16" fill="none" stroke="#111"><path d="M11 2H.5v10h12V7M6.500 12v3M3 15.500h7"/><rect x="12" y=".5" width="3.500" height="5.500" rx="1.500"/><path d="M13.800 6v7"/></svg>
    <svg class="tr-vol" width="16" height="16" viewBox="0 0 16 16" fill="none" stroke="#111"><path d="M.5 5.500h3L7 2v12L3.500 10.500h-3zM9.500 5.500a4 4 0 0 1 0 5M11.500 3.500a7 7 0 0 1 0 9M13.500 2a9.500 9.500 0 0 1 0 12"/></svg>
    <div class="clock"><span>15:44</span><span>2025/12/16</span></div>
  </div>
</footer>
</body>
</html>
```
FILE: styles.css
```css
*{box-sizing:border-box;margin:0;padding:0}
html,body{width:1920px;height:1080px;overflow:hidden}
body{display:flex;flex-direction:column;font:12px/15px "Liberation Sans","Noto Sans CJK SC",sans-serif;color:#262626;background:#f3f3f3}
i,em,b{font-style:normal;font-weight:normal}
svg{display:block;flex:none}

/* shared carets */
.car{display:inline-block;flex:none;width:0;height:0;border-left:3px solid transparent;border-right:3px solid transparent;border-top:3px solid #666}
.car-w{border-top-color:#fff}
.car-d{border-top-color:#5f9a7c}
.car-g{border-top-color:#a6a6a6}

/* title bar */
.titlebar{height:34px;flex:none;background:#217346;color:#fff;display:grid;grid-template-columns:minmax(0,1fr) auto minmax(0,1fr);align-items:center}
.qat{display:flex;align-items:center;padding-left:22px}
.q-undo{margin-left:15px}.q-c1{margin-left:6px}.q-redo{margin-left:10px}.q-c2{margin-left:6px}.q-more{margin-left:13px}
.doc-title{font-size:13px;margin-bottom:4px}
.winctl{display:flex;align-items:center;justify-content:flex-end;padding-right:18px;margin-bottom:4px}
.user{font-size:13px}
.w-rib{margin-left:25px}.w-min{margin-left:35px}.w-res{margin-left:36px}.w-cls{margin-left:37px}

/* tabs */
.tabs{height:32px;flex:none;background:#217346;color:#fff;display:flex;align-items:stretch;padding-left:2.5px}
.tab{display:flex;align-items:center;padding:0 13.5px 3px}
.tab-file{margin-right:5px}
.tab-on{background:#f3f3f3;color:#217346;padding:0 13px 3px}
.tell{display:flex;align-items:center;gap:6px;margin-left:14px}
.share{display:flex;align-items:center;gap:5px;margin-left:auto;padding:0 24px 3px 0}

/* ribbon */
.ribbon{height:94px;flex:none;background:#f3f3f3;display:flex;padding-top:4px;border-bottom:1px solid #c6c6c6}
.group{height:87px;border-right:1px solid #c6c6c6;display:flex;flex-direction:column;flex:none}
.g-clip{width:116px}.g-font{width:250px}.g-align{width:239px}.g-num{width:140px}.g-style{width:675px}.g-cells{width:135px}.g-edit{width:229px}
.gbody{height:73px;display:flex;flex:none}
.gstack{flex-direction:column;padding-top:7px;gap:8px}
.gflex{display:flex}
.glabel{height:14px;text-align:center;position:relative;line-height:14px}
.lab-clip{padding-right:12px}.lab-font{padding-right:16px}.lab-align{padding-right:13px}.lab-num{padding-right:12px}
.launch{position:absolute;right:3px;bottom:1px}
.big{display:flex;flex-direction:column;align-items:center;flex:none}
.slot{height:35.5px;display:flex;align-items:center;justify-content:center;flex:none}
.big .car{margin-top:6px}
.off{color:#9a9a9a}
.big-paste{width:49px}
.smalls{display:flex;flex-direction:column}
.srow{height:23px;display:flex;align-items:center}
.sic{width:19px;display:flex;align-items:center}
.car-ml9{margin-left:9px}
.trow{display:flex;align-items:center;height:23px}
.pl5{padding-left:5px}.pl9{padding-left:9px}.pl8{padding-left:8px}
.combo{height:23px;border:1px solid #c6c6c6;background:#fff;display:flex;align-items:center;padding:1px 0 0 3px;position:relative;font-size:12px}
.c-font{width:157px}.c-size{width:40px;font-size:13px;margin-left:1px}.c-num{width:131px;margin-left:0}
.car-end{margin-left:auto;margin-right:5px}
.fs{position:relative;color:#666;font-size:16px}
.fs-up{margin-left:5px;width:14px}.fs-dn{margin-left:9px;font-size:13px;width:12px;align-self:flex-end;line-height:20px}
.fs i{position:absolute;top:0;right:-3px;width:0;height:0;border-left:3px solid transparent;border-right:3px solid transparent}
.tri-up{border-bottom:3px solid #3f78bd}.tri-dn{border-top:3px solid #3f78bd}
.bt{width:22px;text-align:center;font-size:13px;color:#444}
.bt-b{font-weight:bold}.bt-i{font-style:italic}.bt-u{text-decoration:underline;width:21px}
.car-u{margin-left:5px}
.vsep{width:1px;height:23px;background:#c6c6c6;flex:none}
.sp-a{margin-left:6px}.i-bord{margin-left:8px}.car-b{margin-left:7px}
.sp-b{margin-left:7px}.i-fill{margin-left:7px}.car-f{margin-left:5px}
.i-color{display:block;margin-left:7px;width:16px;height:17px;font-size:14px;line-height:14px;text-align:center;color:#555;border-bottom:3px solid #f00}
.sp-c{margin-left:8px}
.i-wen{display:flex;flex-direction:column;align-items:center;margin-left:7px;width:17px;line-height:9px;font-size:9px;color:#444}
.wen-b{color:#3f78bd;font-size:10px}
.car-w2{margin-left:4px}
.al{display:block}
.alon{width:22px;height:23px;background:#c6c6c6;margin-left:3px;display:flex;justify-content:center}
.al-l{margin-left:4px}
.sp-d{margin-left:7px}
.i-ori{margin-left:8px}.car-o{margin-left:3px}.sp-e{margin-left:21px}
.ori{font:9px "Liberation Sans",sans-serif;fill:#555}
.i-wrap{margin-left:8px;width:14px;font-size:10px;line-height:9px;display:flex;flex-direction:column;color:#444}
.i-wrap i{color:#3f78bd;font-size:8px}
.rtext{margin-left:2px}
.i-ind{margin-left:8px}.i-ind2{margin-left:6px}.sp-f{margin-left:7px}.i-merge{margin-left:7px}.car-m{margin-left:9px}
.car-n{margin-left:5px}
.pct{font-size:14px;margin-left:9px;color:#444}
.cma{font-size:14px;font-weight:bold;margin-left:9px;color:#444;margin-top:-6px}
.sp-g{margin-left:14px}
.dec{margin-left:7px}.dec2{margin-left:7px}
.dt{font:8px "Liberation Sans",sans-serif;fill:#444}
.ne{font:12px "Liberation Sans",sans-serif;text-anchor:middle;fill:#333}
.big-cf{width:56px;margin-left:4px}.big-tf{width:58px}
.tf2{display:flex;align-items:center;white-space:nowrap}
.big .car-tf{margin:0 0 0 3px}
.gallery{margin:2px 0 0 3px;width:547px;height:62px;display:flex}
.sgrid{width:532px;height:62px;background:#fff;border:1px solid #c6c6c6;padding:5px 0 0 3px;display:grid;grid-template-columns:repeat(5,100px);grid-auto-rows:22px;column-gap:6px;row-gap:6px;font-size:14.6px;line-height:20px}
.st{display:flex;align-items:center;padding-left:4px;color:#111;white-space:nowrap}
.st-sel{outline:3px solid #c6c6c6}
.st-bad{background:#ffc7ce;color:#9c0006}
.st-good{background:#c6efce;color:#006100}
.st-mid{background:#ffeb9c;color:#9c5700}
.st-calc{background:#f2f2f2;color:#fa7d00;border:1px solid #7f7f7f}
.st-chk{background:#a5a5a5;color:#fff;-webkit-text-stroke:.2px #fff;border:3px double #3f3f3f;padding-left:2px}
.st-exp{font-style:italic;color:#7f7f7f}
.st-warn{color:#f00}
.st-link{color:#fa7d00;border-bottom:3px double #ff8001;align-items:flex-start}
.sscroll{width:15px;display:flex;flex-direction:column;border:1px solid #c6c6c6;border-left:0;background:#fff}
.ssb{flex:1;display:flex;flex-direction:column;align-items:center;justify-content:center;gap:2px;border-bottom:1px solid #c6c6c6}
.ssb:last-child{border-bottom:0}
.ssb-dis{background:#e6e6e6}
.ssb-more em{width:6px;height:1px;background:#666}
.tri-g{width:0;height:0;border-left:4px solid transparent;border-right:4px solid transparent;border-bottom:4px solid #a6a6a6}
.pl5x{padding-left:5px}
.big-cell{width:42px}
.sm-edit{padding-left:8px;width:97px}
.sic-e{width:19px}
.sigma{font-size:22px;font-weight:bold;color:#555;line-height:22px}
.car-sum{margin-left:12px}.car-fl{margin-left:5px}
.big-sort{width:60px}.big-find{width:60px;margin-left:5px}
.az{font:bold 15px "Liberation Sans",sans-serif}
.az-a{fill:#3f78bd}.az-z{fill:#8e62b8}
.collapse{flex:1;display:flex;justify-content:flex-end;align-items:flex-end;padding:0 11px 4px 0;height:87px}

/* formula bar */
.fbar{height:70px;flex:none;background:#e6e6e6;display:flex;align-items:flex-start;padding:12px 0 0 5px}
.namebox{width:102px;height:26px;background:#fff;border:1px solid #c6c6c6;display:flex;align-items:center;padding-left:7px;font-size:13px;color:#333}
.car-nb{margin-left:auto;margin-right:7px;border-left-width:4px;border-right-width:4px;border-top-width:4px}
.fdots{width:30px;height:26px;display:flex;flex-direction:column;align-items:center;justify-content:center;gap:2px}
.fdots i{width:2px;height:2px;background:#a6a6a6}
.fnbox{width:110px;height:26px;background:#fff;border:1px solid #c6c6c6;display:flex;align-items:center;padding-left:13px;gap:23px}
.fx{font:italic 13px "Liberation Serif",serif;color:#555;margin-left:2px}
.finput{width:1665px;height:48px;margin-left:3px;background:#fff;border:1px solid #c6c6c6;display:flex;justify-content:flex-end;padding:9px 4px 0 0}

/* sheet */
.sheetarea{height:752px;flex:none;display:flex;background:#e6e6e6}
.sheet{width:1899px;display:flex;border-right:1px solid #a6a6a6;background:#fff;overflow:hidden}
.rowheads{width:15px;flex:none;background:#e6e6e6;display:flex;flex-direction:column;border-right:1px solid #a6a6a6;overflow:hidden}
.corner{height:11px;flex:none;border-bottom:1px solid #a6a6a6;position:relative}
.corner i{position:absolute;right:2px;bottom:2px;width:0;height:0;border-left:3px solid transparent;border-bottom:3px solid #a6a6a6}
.rh{height:36px;flex:none;display:flex;align-items:flex-end;justify-content:center;font-size:8px;line-height:9px;color:#6a6a6a;border-bottom:1px solid #bcbcbc;padding-right:2px}
.rh1{height:50px}.rh2{height:37px}
.rh-sel{background:#d2d2d2;color:#217346;border-right:2px solid #217346;margin-right:-1px}
.sheetmain{width:1883px;flex:none;display:flex;flex-direction:column}
.colheads{height:11px;flex:none;display:grid;grid-template-columns:51px 53px 55px 55px repeat(33,48px) 45px 36px 4px;background:#e6e6e6;border-bottom:1px solid #a6a6a6}
.colheads span{font-size:8px;line-height:10px;text-align:center;color:#6a6a6a;border-right:1px solid #bcbcbc}
.colheads .ch-sel{background:#d2d2d2;color:#217346;height:11px;border-bottom:2px solid #217346}
.roster{table-layout:fixed;border-collapse:separate;border-spacing:0;width:1883px;flex:none;font-size:11px;line-height:14px;color:#000}
.ca{width:51px}.cb{width:53px}.cc{width:55px}.cd{width:48px}.cal{width:45px}.cam{width:36px}.can{width:4px}
.roster tr{height:36px}
.roster .r1{height:50px}.roster .r2{height:37px}
.roster td{border-right:1px solid #000;border-bottom:1px solid #000;text-align:center;vertical-align:middle;position:relative;padding:0 0 2px;overflow:hidden;white-space:nowrap}
.roster td.g{border-right:1px solid #d4d4d4;border-bottom:1px solid #d4d4d4}
.roster td.g2{border-right:0;border-bottom:1px solid #d4d4d4}
.roster td.title{background:#203764;color:#fff;font-size:13px;line-height:17px;letter-spacing:.35px;-webkit-text-stroke:.2px #fff;border-color:#203764;padding:2px 0 0}
.roster td.h{background:#d6dce4;-webkit-text-stroke:.2px #000;letter-spacing:.25px;padding:0}
.roster td.y{background:#fff2cc}
.roster td.hb{line-height:14px;font-size:11.5px;padding-top:3px}
.roster td.hq{font-size:12px;line-height:17px}
.roster .r2 td.hq{padding-top:2px;line-height:16px}
.roster td.hal{font-size:12px;line-height:16px}
.ht{box-shadow:inset 0 1px 0 #000}
.yp{line-height:14px}
.p{color:#222;font-size:11px}
.cn{font-size:10.7px;color:#444;letter-spacing:0}
.dept{font-weight:bold;color:#000}
.n,.r,.ph,.al-c,.c{-webkit-text-stroke:.2px #000}
.n::before{content:"";position:absolute;left:0;top:0;border-top:3px solid #1f7a2c;border-right:3px solid transparent}
.r{background:#ffc000}
.ph{background:#9bc2e6}
.al-c{background:#a9d08e}
.blank{flex:1;display:grid;grid-template-columns:51px 53px 55px 55px repeat(33,48px) 45px 36px 4px;position:relative;background:repeating-linear-gradient(to bottom,#fff 0,#fff 35px,#d4d4d4 35px,#d4d4d4 36px)}
.blank i{border-right:1px solid #d4d4d4}
.blank i:last-of-type{border-right:0}
.sel{position:absolute;left:1652px;top:34px;width:51px;height:38px;border:2px solid #217346}
.sel b{position:absolute;right:-4px;bottom:-4px;width:6px;height:6px;background:#217346;border:1px solid #fff}

/* vertical scrollbar */
.vscroll{width:21px;display:flex;flex-direction:column;padding:3px 3px 0 3px}
.vbtn{height:15px;background:#fff;border:1px solid #ababab;display:flex;align-items:center;justify-content:center;flex:none}
.vbtn .tri-g{border-bottom-color:#666}
.vthumb{height:702px;background:#fff;border:1px solid #ababab;margin-top:1px;flex:none}
.vbtn-d{margin-top:auto}

/* sheet tabs */
.tabbar{height:28px;flex:none;background:#e6e6e6;border-top:1px solid #a6a6a6;display:flex;align-items:center;position:relative}
.nav{display:flex}
.n1{margin-left:27px}.n2{margin-left:25px}
.tri-l,.tri-r{display:block;width:0;height:0;border-top:4px solid transparent;border-bottom:4px solid transparent}
.tri-l{border-right:4px solid #b5b5b5}.tri-r{border-left:4px solid #b5b5b5}
.tsep{width:1px;height:20px;background:#a6a6a6;margin-left:38px}
.sh{height:22px;display:flex;align-items:center;justify-content:center;font-size:13px;margin-top:-1px;padding-bottom:3px}
.sh-g{width:97px;background:#92d050;color:#111;margin-left:2px}
.sh-on{width:42px;height:24px;margin:-3px 0 0 2px;padding-bottom:2px;background:#fff;color:#217346;border-bottom:2px solid #217346}
.sh-add{margin-left:34px}
.hdots{display:flex;flex-direction:column;gap:2px;margin-left:859px}
.hdots i{width:2px;height:2px;background:#a6a6a6}
.hbtn{width:14px;height:15px;background:#fff;border:1px solid #ababab;display:flex;align-items:center;justify-content:center}
.hbtn i{border-left-color:#666;border-right-color:#666}
.hbtn-l{margin-left:16px}
.hthumb{width:681px;height:15px;background:#fff;border:1px solid #ababab;margin-left:1px}
.hbtn-r{margin-left:22px}

/* status bar */
.status{height:22px;flex:none;background:#f3f3f3;border-top:1px solid #c6c6c6;border-bottom:1px solid #a3bdb0;display:flex;align-items:center}
.ready{margin-left:8px;margin-right:1597px}
.view{width:38px;height:20px;display:flex;align-items:center;justify-content:center}
.view-on{background:#c6c6c6}
.zm{display:block;background:#666}
.zm-minus{width:6px;height:2px;margin-left:5px}
.slider{width:100px;height:1px;background:#a6a6a6;margin-left:5px;position:relative}
.sl-t{position:absolute;left:22px;top:-5px;width:5px;height:11px;background:#666}
.sl-m{position:absolute;left:50px;top:-2px;width:1px;height:5px;background:#a6a6a6}
.zm-plus{width:6px;height:6px;margin-left:4px;background:linear-gradient(#666,#666) center/6px 2px no-repeat,linear-gradient(#666,#666) center/2px 6px no-repeat}
.pctz{margin-left:13px;font-size:12px}

/* task bar */
.taskbar{height:48px;flex:none;background:#c8ecdd;display:flex;align-items:center;color:#111}
.weather{width:660px;padding-left:19px;display:flex;align-items:center;gap:7px}
.wtext{display:flex;flex-direction:column;line-height:16px;font-size:12px}
.wcn{color:#444}
.search{width:218px;height:30px;margin-left:14px;border-radius:15px;background:#eef8f3;box-shadow:0 1px 1px #aac9ba;display:flex;align-items:center;padding-left:10px}
.s-txt{margin-left:11px;font-size:13.5px;color:#444;letter-spacing:.3px}
.s-art{margin-left:auto;margin-right:5px}
.ts{width:44px;height:48px;flex:none;display:flex;align-items:center;justify-content:center;position:relative}
.search + .ts{margin-left:3px}
.run::after{content:"";position:absolute;left:19px;bottom:4px;width:6px;height:3px;border-radius:2px;background:#7e8c86}
.ts-wx::before{content:"";position:absolute;left:2px;top:4px;width:40px;height:40px;border-radius:4px;background:#e8b0ac}
.ts-wx::after{content:"";position:absolute;left:6px;top:41px;width:32px;height:3px;border-radius:2px;background:#c7281d}
.ts-wx svg{position:relative}
.ts-xl::before{content:"";position:absolute;left:3px;top:5px;width:34px;height:38px;border-radius:3px;background:#dff2ea}
.ts-xl::after{content:"";position:absolute;left:14px;bottom:4px;width:15px;height:3px;border-radius:2px;background:#0a74da}
.ts-xl svg{position:relative}
.xl{font:bold 13px "Liberation Sans",sans-serif;fill:#fff}
.tray{flex:1;display:flex;align-items:center;padding-right:19px}
.tr-up{margin-left:375px}
.tr-sync{margin-left:18px}
.tr-zh{margin-left:16px;font-size:15px}
.tr-py{margin-left:24px;font-size:15px}
.tr-mon{margin-left:22px}
.tr-vol{margin-left:8px}
.clock{margin-left:auto;display:flex;flex-direction:column;align-items:flex-end;line-height:16px;font-size:12px}
```
